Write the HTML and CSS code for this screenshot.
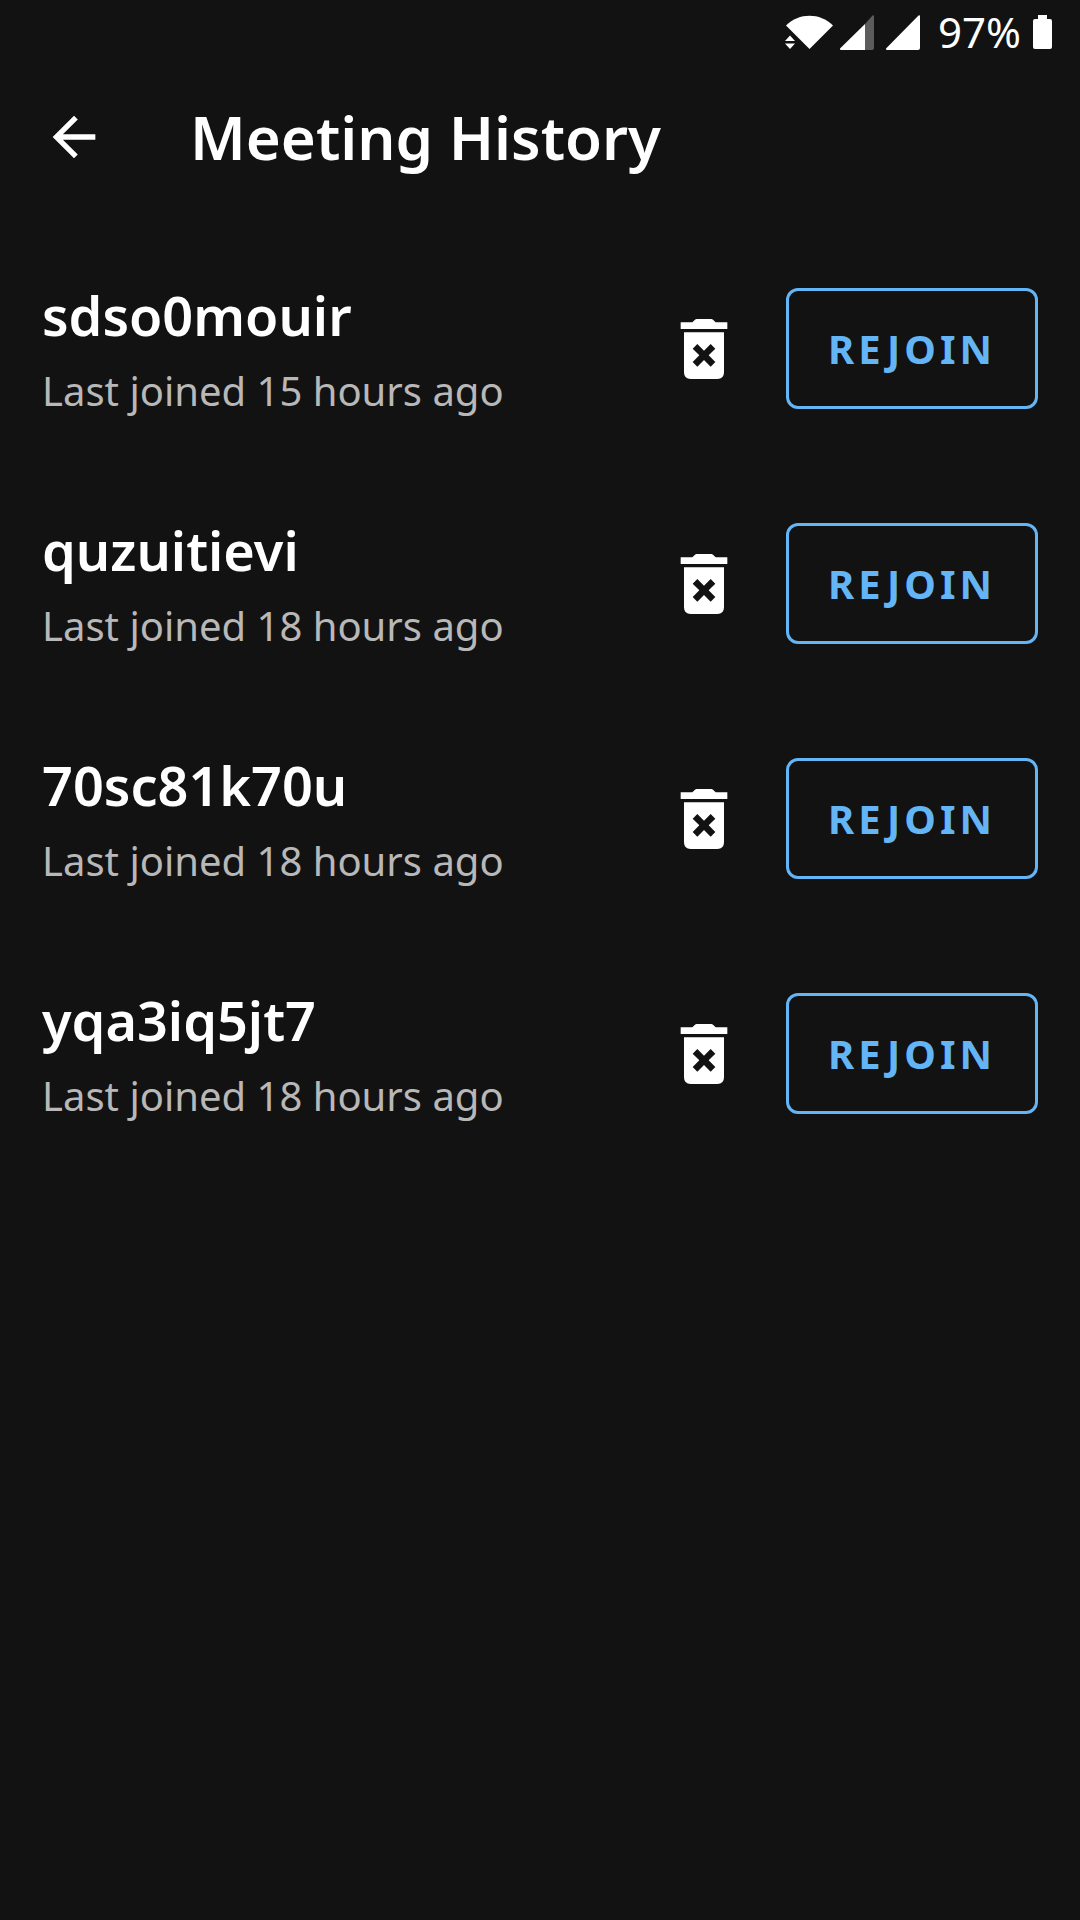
FILE: index.html
```
<!DOCTYPE html>
<html lang="en">
<head>
<meta charset="utf-8">
<meta name="viewport" content="width=device-width, initial-scale=1">
<title>Meeting History</title>
<link rel="stylesheet" href="styles.css">
</head>
<body>
<svg class="sprite" aria-hidden="true">
  <symbol id="trash" viewBox="0 0 24 24">
    <path fill-rule="evenodd" d="M6 7h12v12q0 2-2 2H8q-2 0-2-2zM10 10.500l-1.400 1.400 2 2-2 2 1.400 1.400 2-2 2 2 1.400-1.400-2-2 2-2-1.400-1.400-2 2z"/>
    <path d="M5 4h3.500l.8-.8q.2-.2.5-.2h4.400q.3 0 .5.200l.8.8H19v2H5z"/>
  </symbol>
</svg>

<div class="status">
  <svg class="wifi" viewBox="0 0 48 34" aria-hidden="true">
    <path d="M1 10.500C14-2.500 35-2.500 48 10.500L24.500 34z"/>
    <path class="halo" d="M0 27.500l5-10 8 10v2l-4 4z"/>
    <path d="M0 26l5-5.500 5 5.500zM0 28.500h10L5 34z"/>
  </svg>
  <svg class="signal" viewBox="0 0 34 35" aria-hidden="true">
    <path class="dim" d="M25 9l7.500-8.500q1.500-1 1.500 1V33q0 2-2 2h-7z"/>
    <path d="M25 9V35H1q-2-.5-.5-2z"/>
  </svg>
  <svg class="signal last" viewBox="0 0 34 35" aria-hidden="true">
    <path d="M32.500.5q1.500-1 1.500 1V33q0 2-2 2H1q-2-.5-.5-2z"/>
  </svg>
  <span class="percent">97%</span>
  <svg class="battery" viewBox="0 0 19 34" aria-hidden="true">
    <path d="M5 0h9v4h3q2 0 2 2v26q0 2-2 2H2q-2 0-2-2V6q0-2 2-2h3z"/>
  </svg>
</div>

<header class="bar">
  <button class="icon-button back" type="button" aria-label="Back">
    <svg viewBox="0 0 24 24" aria-hidden="true"><path d="M20 11H7.830l5.590-5.590L12 4l-8 8 8 8 1.410-1.410L7.830 13H20z"/></svg>
  </button>
  <h1>Meeting History</h1>
</header>

<main>
  <ul class="meetings">
    <li class="meeting">
      <div class="info">
        <h2>sdso0mouir</h2>
        <p>Last joined 15 hours ago</p>
      </div>
      <button class="icon-button delete" type="button" aria-label="Delete sdso0mouir"><svg aria-hidden="true"><use href="#trash"/></svg></button>
      <button class="rejoin" type="button">REJOIN</button>
    </li>
    <li class="meeting">
      <div class="info">
        <h2>quzuitievi</h2>
        <p>Last joined 18 hours ago</p>
      </div>
      <button class="icon-button delete" type="button" aria-label="Delete quzuitievi"><svg aria-hidden="true"><use href="#trash"/></svg></button>
      <button class="rejoin" type="button">REJOIN</button>
    </li>
    <li class="meeting">
      <div class="info">
        <h2>70sc81k70u</h2>
        <p>Last joined 18 hours ago</p>
      </div>
      <button class="icon-button delete" type="button" aria-label="Delete 70sc81k70u"><svg aria-hidden="true"><use href="#trash"/></svg></button>
      <button class="rejoin" type="button">REJOIN</button>
    </li>
    <li class="meeting">
      <div class="info">
        <h2>yqa3iq5jt7</h2>
        <p>Last joined 18 hours ago</p>
      </div>
      <button class="icon-button delete" type="button" aria-label="Delete yqa3iq5jt7"><svg aria-hidden="true"><use href="#trash"/></svg></button>
      <button class="rejoin" type="button">REJOIN</button>
    </li>
  </ul>
</main>
</body>
</html>
```
FILE: styles.css
```
* {
  box-sizing: border-box;
}

body {
  margin: 0;
  min-height: 100vh;
  background: #121212;
  color: #fff;
  font-family: "Noto Sans", "Open Sans", sans-serif;
}

h1,
h2,
p {
  margin: 0;
}

svg {
  display: block;
  fill: currentColor;
}

.sprite {
  display: none;
}

/* Status bar */
.status {
  display: flex;
  align-items: center;
  justify-content: flex-end;
  height: 64px;
  padding-right: 28px;
}

.wifi {
  width: 48px;
  height: 34px;
  margin-right: 7px;
}

.halo {
  fill: #121212;
}

.signal {
  width: 34px;
  height: 35px;
  margin-right: 12px;
}

.signal.last {
  margin-right: 18px;
}

.dim {
  fill: #5c5c5c;
}

.percent {
  font-size: 42px;
  font-weight: 400;
  line-height: 56px;
}

.battery {
  width: 19px;
  height: 34px;
  margin-left: 12px;
}

/* App bar */
.bar {
  display: flex;
  align-items: center;
  gap: 84px;
  height: 146px;
  padding: 0 42px;
}

.bar h1 {
  font-size: 60px;
  font-weight: 600;
  line-height: 80px;
}

.icon-button {
  flex: none;
  padding: 0;
  border: 0;
  background: none;
  color: inherit;
  cursor: pointer;
}

.icon-button svg {
  width: 100%;
  height: 100%;
}

.back {
  width: 64px;
  height: 64px;
}

/* Meeting list */
.meetings {
  margin: 0;
  padding: 21px 0 0;
  list-style: none;
}

.meeting {
  display: flex;
  align-items: center;
  height: 235px;
  padding: 0 42px;
}

.info {
  display: grid;
  flex: 1;
  gap: 12px;
}

.info h2 {
  font-size: 54px;
  font-weight: 600;
  line-height: 72px;
}

.info p {
  color: #b8b8b8;
  font-size: 40px;
  line-height: 56px;
}

.delete {
  width: 80px;
  height: 80px;
  margin-right: 42px;
}

.rejoin {
  width: 252px;
  height: 121px;
  border: 3px solid #64b5f6;
  border-radius: 12px;
  background: none;
  color: #64b5f6;
  font-family: inherit;
  font-size: 40px;
  font-weight: 700;
  letter-spacing: 4px;
  cursor: pointer;
}
```
